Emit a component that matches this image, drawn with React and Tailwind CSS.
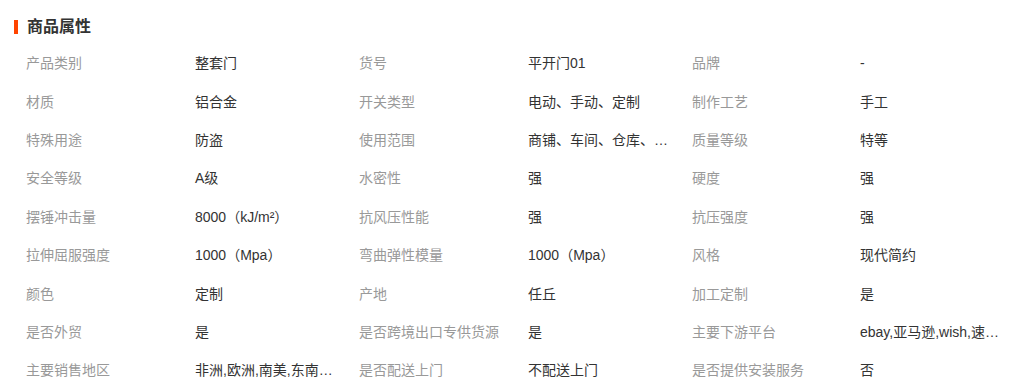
import React from "react";

const rows = [
  [["产品类别", "整套门"], ["货号", "平开门01"], ["品牌", "-"]],
  [["材质", "铝合金"], ["开关类型", "电动、手动、定制"], ["制作工艺", "手工"]],
  [["特殊用途", "防盗"], ["使用范围", "商铺、车间、仓库、…"], ["质量等级", "特等"]],
  [["安全等级", "A级"], ["水密性", "强"], ["硬度", "强"]],
  [["摆锤冲击量", "8000（kJ/m²）"], ["抗风压性能", "强"], ["抗压强度", "强"]],
  [["拉伸屈服强度", "1000（Mpa）"], ["弯曲弹性模量", "1000（Mpa）"], ["风格", "现代简约"]],
  [["颜色", "定制"], ["产地", "任丘"], ["加工定制", "是"]],
  [["是否外贸", "是"], ["是否跨境出口专供货源", "是"], ["主要下游平台", "ebay,亚马逊,wish,速…"]],
  [["主要销售地区", "非洲,欧洲,南美,东南…"], ["是否配送上门", "不配送上门"], ["是否提供安装服务", "否"]],
];

export default function App() {
  return (
    <div
      className="w-[1013px] h-[388px] bg-white overflow-hidden"
      style={{ fontFamily: '"Liberation Sans", "Noto Sans CJK SC", sans-serif' }}
    >
      <div className="flex items-center h-[44px] pl-[14px] pt-[10px]">
        <div className="w-[4px] h-[14px] bg-[#ff4400]" />
        <div className="ml-[9px] text-[16px] leading-[20px] font-bold text-[#333]">商品属性</div>
      </div>
      <div className="flex flex-col">
        {rows.map((row, i) => (
          <div
            key={i}
            className="grid grid-cols-[169px_164px_169px_164px_168px_1fr] pl-[26px] h-[38.4px] items-center text-[14px] leading-[20px]"
          >
            {row.map(([k, v], j) => (
              <React.Fragment key={j}>
                <div className="text-[#999] whitespace-nowrap">{k}</div>
                <div className="text-[#333] whitespace-nowrap">{v}</div>
              </React.Fragment>
            ))}
          </div>
        ))}
      </div>
    </div>
  );
}
